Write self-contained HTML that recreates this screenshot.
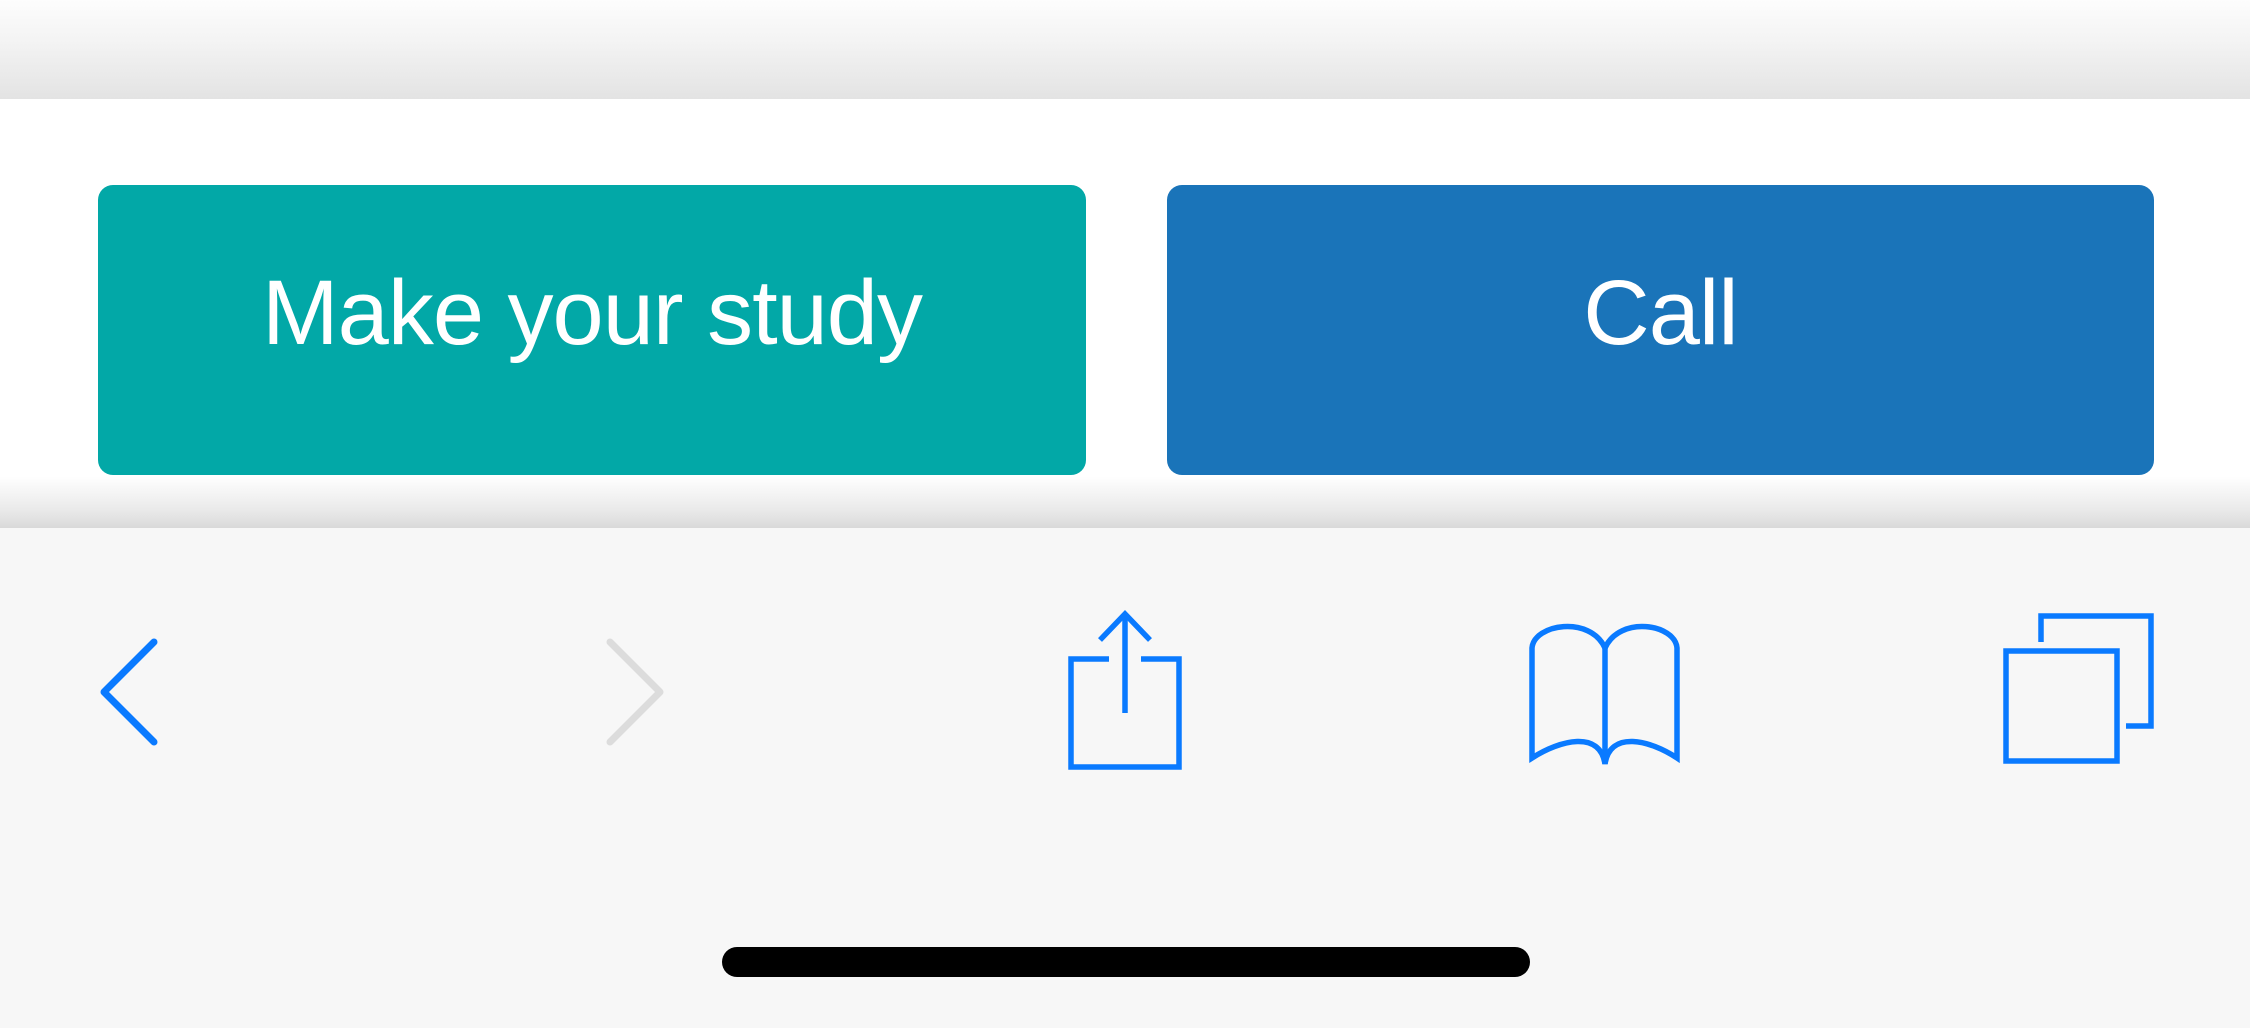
<!DOCTYPE html>
<html><head><meta charset="utf-8"><style>
html,body{margin:0;padding:0;}
body{width:2250px;height:1028px;position:relative;overflow:hidden;background:#f7f7f7;font-family:"Liberation Sans",sans-serif;}
.top{position:absolute;left:0;top:0;width:2250px;height:99px;background:linear-gradient(#fdfdfd 0%,#f4f4f4 40%,#e3e3e3 100%);}
.band{position:absolute;left:0;top:99px;width:2250px;height:429px;background:linear-gradient(#fff 0%,#fff 88%,#e9e9e9 96%,#d9d9d9 100%);}
.btn{position:absolute;top:185px;height:290px;border-radius:15px;color:#fff;font-size:92px;display:flex;align-items:center;justify-content:center;letter-spacing:-1px;}
.btn span{position:relative;top:-17px;}
.b1{left:98px;width:988px;background:#02a8a7;}
.b2{left:1167px;width:987px;background:#1a74b9;}
svg{position:absolute;left:0;top:0;}
</style></head><body>
<div class="top"></div>
<div class="band"></div>
<div class="btn b1"><span>Make your study</span></div>
<div class="btn b2"><span>Call</span></div>
<svg width="2250" height="1028" viewBox="0 0 2250 1028">
<g fill="none" stroke-linecap="round" stroke-linejoin="round">
<path d="M154 642 L104 692 L154 742" stroke="#0a7aff" stroke-width="7"/>
<path d="M610 642 L660 692 L610 742" stroke="#dcdcdc" stroke-width="7"/>
</g>
<g fill="none" stroke="#0a7aff" stroke-width="5.5">
<path d="M1109 659 H1071 V767 H1179 V659 H1141"/>
<path d="M1125 713 V615"/>
<path d="M1100 640 L1125 614 L1150 640"/>
<path d="M1605 648 C1590 615 1534 624 1532 648 V758 C1560 740 1600 730 1605 764 C1610 730 1650 740 1677 758 V648 C1675 624 1620 615 1605 648 Z"/>
<path d="M1605 648 V764"/>
<rect x="2006" y="651" width="111" height="110"/>
<path d="M2041 642 V616 H2151 V726 H2126"/>
</g>
<rect x="722" y="947" width="808" height="30" rx="15" fill="#000"/>
</svg>
</body></html>
